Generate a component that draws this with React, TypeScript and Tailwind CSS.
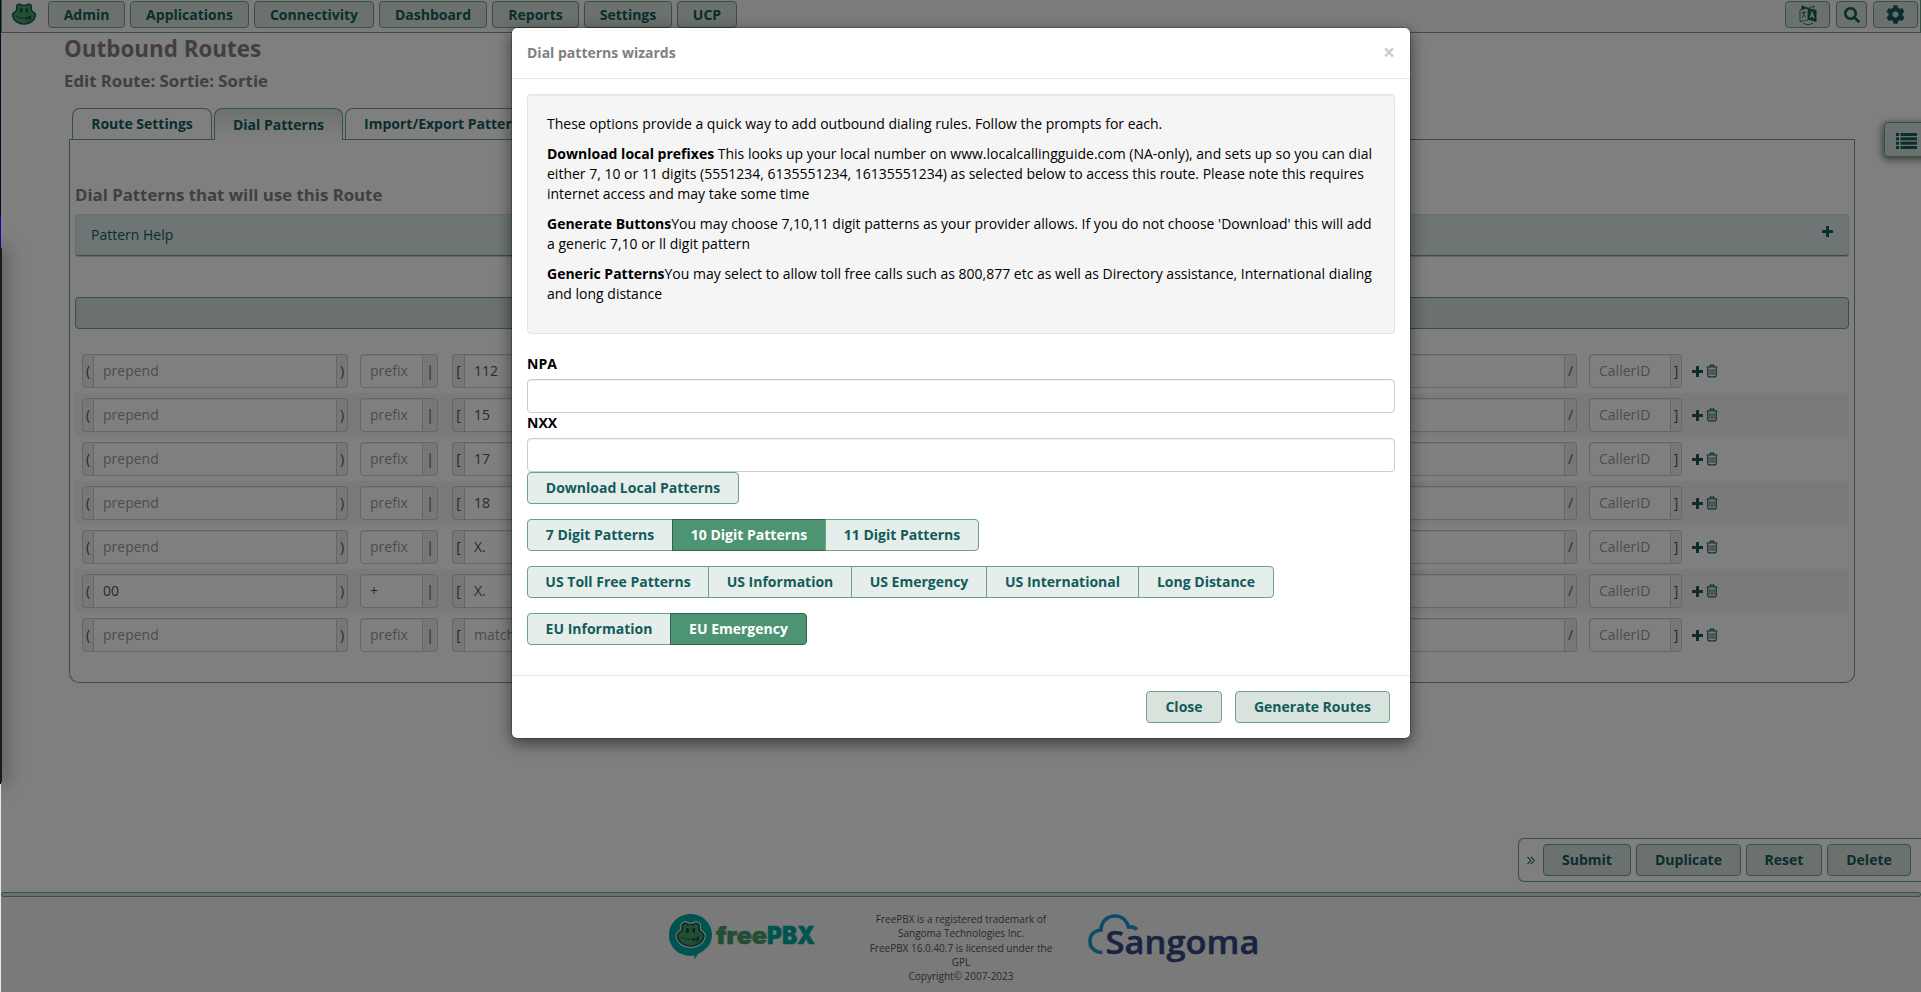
import type { ReactNode } from "react";
import { FaSearch, FaCog } from "react-icons/fa";

const NAV = [
  { label: "Admin", width: "w-[77px]" },
  { label: "Applications", width: "w-[119px]" },
  { label: "Connectivity", width: "w-[120px]" },
  { label: "Dashboard", width: "w-[108px]" },
  { label: "Reports", width: "w-[87px]" },
  { label: "Settings", width: "w-[88px]" },
  { label: "UCP", width: "w-[60px]" },
];

type Pattern = { prepend?: string; prefix?: string; match?: string };

const PATTERNS: Pattern[] = [
  { match: "112" },
  { match: "15" },
  { match: "17" },
  { match: "18" },
  { match: "X." },
  { prepend: "00", prefix: "+", match: "X." },
  {},
];

const BUTTON =
  "flex items-center justify-center rounded border border-[#68a388] bg-[#d7e3dc] text-sm font-bold text-[#125c5a]";

function FrogFace() {
  return (
    <g>
      <path
        d="M12 8C12 2 21 1 23 5.500Q28 4 33 5.500C35 1 44 2 44 8C44 11 43 13 45 17C50 20 54 23 53 28C51 39 39 46 28 46C17 46 5 39 3 28C2 23 6 20 11 17C13 13 12 11 12 8Z"
        fill="#489c66"
        stroke="#16504e"
        strokeWidth="3"
      />
      <ellipse cx="22" cy="16" rx="2.600" ry="5" fill="#12403f" />
      <ellipse cx="34" cy="16" rx="2.600" ry="5" fill="#12403f" />
      <path d="M12 29C20 35 32 35 43 28" fill="none" stroke="#16504e" strokeWidth="1.800" strokeLinecap="round" />
      <path d="M30 34L44 28C45 34 41 40 35 39Z" fill="#16504e" />
      <path d="M34 36L40 34L38 38Z" fill="#f08a5a" />
    </g>
  );
}

function LanguageIcon() {
  return (
    <svg width="18" height="20" viewBox="0 0 18 20" fill="none">
      <path d="M1 5L9 3V15L1 16.500Z" stroke="#125c5a" strokeWidth="0.800" />
      <path d="M3 1L9 3.500L15 1V3.500" stroke="#125c5a" strokeWidth="0.800" />
      <path d="M2.500 0.500L9 3L2.500 4.500Z" fill="#125c5a" />
      <path d="M9 3L17.500 5V17L9 14.800Z" fill="#125c5a" />
      <path d="M11.200 13L13 7.500L15.200 13.500M11.800 11H14.500" stroke="#d7e3dc" strokeWidth="1.300" />
      <path d="M3 8L7 7.200M5 6V8C5 10 4 12 3 13M4 9.500L7 12.500" stroke="#125c5a" strokeWidth="0.900" />
      <path d="M4 18C7 20 11 20 14 18" stroke="#125c5a" strokeWidth="0.900" />
    </svg>
  );
}

function PlusIcon({ className }: { className?: string }) {
  return (
    <svg width="11" height="11" viewBox="0 0 11 11" fill="currentColor" className={className}>
      <rect x="0" y="4" width="11" height="3" rx="0.600" />
      <rect x="4" y="0" width="3" height="11" rx="0.600" />
    </svg>
  );
}

function ListIcon() {
  return (
    <svg width="21" height="16" viewBox="0 0 21 16" fill="currentColor">
      {[0, 4.3, 8.700, 13].map((y) => (
        <g key={y}>
          <rect x="0" y={y} width="3" height="3" />
          <rect x="4.500" y={y} width="16.500" height="3" />
        </g>
      ))}
    </svg>
  );
}

function TrashIcon() {
  return (
    <svg width="12" height="14" viewBox="0 0 12 14" fill="none" stroke="#125c5a" strokeWidth="1.200">
      <path d="M0.500 3H11.500M3.800 3L4.300 1.100H7.700L8.200 3M1.800 3V11.600Q1.800 12.900 3 12.900H9Q10.200 12.900 10.200 11.600V3" />
      <path d="M4 5V11M6 5V11M8 5V11" strokeWidth="0.900" />
    </svg>
  );
}

function FreePbxLogo() {
  return (
    <svg width="148" height="46" viewBox="0 0 148 46">
      <path d="M21.500 0C33.500 0 43 9.500 43 21C43 31 36 36.500 29 40L25.500 45.500V41.500C10 43.500 0 33.500 0 21C0 9.500 9.500 0 21.500 0Z" fill="#00a8a0" />
      <g transform="translate(6.800 7.800) scale(0.530)">
        <path
          d="M12 8C12 2 21 1 23 5.500Q28 4 33 5.500C35 1 44 2 44 8C44 11 43 13 45 17C50 20 54 23 53 28C51 39 39 46 28 46C17 46 5 39 3 28C2 23 6 20 11 17C13 13 12 11 12 8Z"
          fill="#f2f5f3"
          stroke="#f2f5f3"
          strokeWidth="7"
        />
        <FrogFace />
      </g>
      <text x="47" y="30" fontFamily="Inter" fontWeight="900" fontSize="24" stroke="#489c66" strokeWidth="0.500" textLength="51" lengthAdjust="spacingAndGlyphs" fill="#489c66">
        free
      </text>
      <text x="98" y="30" fontFamily="Inter" fontWeight="900" fontSize="24" stroke="#00a8a0" strokeWidth="0.500" textLength="48" lengthAdjust="spacingAndGlyphs" fill="#00a8a0">
        PBX
      </text>
    </svg>
  );
}

function SangomaLogo() {
  return (
    <svg width="172" height="52" viewBox="0 0 172 52">
      <path
        d="M14.500 38.300H11C4 36 1.500 31 2 26C2.500 20 7 16.500 13 16C13 8 19 2 27 2C34.500 2 39 7 40.500 13C44 12.500 47 13.500 49 15.500"
        fill="none"
        stroke="#1a98d0"
        strokeWidth="3.600"
      />
      <text x="17.500" y="39.500" fontFamily="Open Sans" fontWeight="600" fontSize="33" stroke="#344882" strokeWidth="0.500" textLength="154" lengthAdjust="spacingAndGlyphs" fill="#344882">
        Sangoma
      </text>
    </svg>
  );
}

function Addon({ children, width, side }: { children: ReactNode; width: string; side: "left" | "right" }) {
  return (
    <div
      className={`${width} flex shrink-0 items-center justify-center border border-[#cccccc] bg-[#eeeeee] text-sm leading-none text-[#555555] ${
        side === "left" ? "rounded-l border-r-0" : "rounded-r border-l-0"
      }`}
    >
      {children}
    </div>
  );
}

function Field({ value, hint, rounded }: { value?: string; hint: string; rounded?: boolean }) {
  return (
    <div
      className={`flex min-w-0 grow items-center border border-[#cccccc] bg-white pl-[9px] text-sm shadow-[inset_0_1px_1px_rgba(0,0,0,0.075)] ${
        rounded ? "rounded-l" : ""
      } ${value ? "text-[#555555]" : "text-[#999999]"}`}
    >
      {value ?? hint}
    </div>
  );
}

function PatternRow({ row, striped }: { row: Pattern; striped: boolean }) {
  return (
    <div className={`flex h-11 items-center pl-[7px] ${striped ? "bg-[#f4f4f4]" : ""}`}>
      <div className="flex h-[34px] w-[266px]">
        <Addon width="w-[11px]" side="left">(</Addon>
        <Field value={row.prepend} hint="prepend" />
        <Addon width="w-[11px]" side="right">)</Addon>
      </div>
      <div className="ml-3 flex h-[34px] w-[78px]">
        <Field value={row.prefix} hint="prefix" rounded />
        <Addon width="w-[15px]" side="right">|</Addon>
      </div>
      <div className="ml-3.5 flex h-[34px] w-[1125px]">
        <Addon width="w-3" side="left">[</Addon>
        <Field value={row.match} hint="match pattern" />
        <Addon width="w-3" side="right">/</Addon>
      </div>
      <div className="ml-3 flex h-[34px] w-[93px]">
        <Field hint="CallerID" rounded />
        <Addon width="w-[11px]" side="right">]</Addon>
      </div>
      <div className="ml-2.5 flex items-center gap-[3px] text-[#125c5a]">
        <PlusIcon />
        <TrashIcon />
      </div>
    </div>
  );
}

function Tab({ label, width, active }: { label: string; width: string; active?: boolean }) {
  return (
    <div
      className={`${width} flex shrink-0 items-center justify-center rounded-t-lg border border-b-0 border-[#68a388] text-sm font-bold text-[#125c5a] ${
        active ? "h-8 bg-linear-to-b from-[#d7e3dc] to-white" : "mb-px h-[31px]"
      }`}
    >
      {label}
    </div>
  );
}

type GroupItem = { label: string; width: string; on?: boolean };

function ButtonGroup({ items }: { items: GroupItem[] }) {
  return (
    <div className="mt-[15px] flex h-8">
      {items.map((item, i) => (
        <div
          key={item.label}
          className={`${item.width} ${i > 0 ? "-ml-px" : "rounded-l"} ${i === items.length - 1 ? "rounded-r" : ""} flex shrink-0 items-center justify-center border text-sm font-bold ${
            item.on ? "border-[#37604c] bg-[#4d9472] text-white" : "border-[#68a388] bg-[#e5eeea] text-[#125c5a]"
          }`}
        >
          {item.label}
        </div>
      ))}
    </div>
  );
}

function Page() {
  return (
    <div className="ml-px flex h-[992px] w-[1920px] flex-col bg-white">
      <header className="flex h-[33px] shrink-0 items-start border-x border-b border-[#68a388] bg-[#f8f8f8] pt-px">
        <svg width="26" height="22" viewBox="0 0 56 48" className="mt-0.5 ml-[9px]">
          <FrogFace />
        </svg>
        <nav className="ml-[11px] flex gap-[5px]">
          {NAV.map((n) => (
            <div key={n.label} className={`${BUTTON} ${n.width} h-[27px]`}>
              {n.label}
            </div>
          ))}
        </nav>
        <div className="ml-auto flex gap-1.5 pr-0.5">
          <div className={`${BUTTON} h-[27px] w-[45px]`}>
            <LanguageIcon />
          </div>
          <div className={`${BUTTON} h-[27px] w-[31px]`}>
            <FaSearch size={16} />
          </div>
          <div className={`${BUTTON} h-[27px] w-[45px]`}>
            <FaCog size={19} />
          </div>
        </div>
      </header>

      <main className="flex grow flex-col pl-[63px]">
        <h1 className="mt-[3px] text-[22.4px] leading-[26px] font-bold text-[#808080]">Outbound Routes</h1>
        <h2 className="mt-[9px] text-[16.8px] leading-5 font-bold text-[#808080]">Edit Route: Sortie: Sortie</h2>
        <div className="mt-[17px] -mb-px ml-2 flex h-8 items-end gap-0.5">
          <Tab label="Route Settings" width="w-[140px]" />
          <Tab label="Dial Patterns" width="w-[129px]" active />
          <Tab label="Import/Export Patterns" width="w-[202px]" />
        </div>
        <section className="ml-[5px] h-[544px] w-[1786px] rounded-b-[10px] border border-[#68a388] px-[5px] [border-top-color:transparent]">
          <div className="-mx-1.5 -mt-px flex h-px">
            <div className="w-[145px] bg-[#68a388]" />
            <div className="w-[129px] border-x border-[#68a388]" />
            <div className="grow bg-[#68a388]" />
          </div>
          <h3 className="mt-[45px] text-[16.8px] leading-5 font-bold text-[#808080]">Dial Patterns that will use this Route</h3>
          <div className="mt-[9px] flex h-[42px] items-center rounded border border-[#cddcda] border-b-[#68a388] bg-[#dcebe9] pl-[15px] text-sm text-[#125c5a] shadow-[0_1px_1px_rgba(0,0,0,0.2)]">
            <span>Pattern Help</span>
            <PlusIcon className="mr-[15px] mb-2 ml-auto" />
          </div>
          <div className="mt-[41px] h-8 rounded border border-[#68a388] bg-[#d7e3dc]" />
          <div className="mt-5">
            {PATTERNS.map((row, i) => (
              <PatternRow key={i} row={row} striped={i % 2 === 1} />
            ))}
          </div>
        </section>
        <div className="mt-[155px] ml-auto flex h-11 w-[403px] shrink-0 items-center gap-[5px] rounded-l-md border border-r-0 border-[#68a388] pl-[7px] text-[#125c5a]">
          <svg width="8" height="9" viewBox="0 0 8 9" className="mr-[3px] ml-px shrink-0" fill="none" stroke="#125c5a" strokeWidth="1.100">
            <path d="M0.500 0.800L3.800 4.500L0.500 8.200M4 0.800L7.300 4.500L4 8.200" />
          </svg>
          <div className={`${BUTTON} h-8 w-[88px]`}>Submit</div>
          <div className={`${BUTTON} h-8 w-[105px]`}>Duplicate</div>
          <div className={`${BUTTON} h-8 w-[76px]`}>Reset</div>
          <div className={`${BUTTON} h-8 w-[84px]`}>Delete</div>
        </div>
      </main>

      <footer className="h-[100px] shrink-0 bg-[#f4f4f4]">
        <div className="h-[5px] rounded border border-[#68a388] bg-[#d7e3dc]" />
        <div className="flex items-start">
          <div className="mt-[17px] ml-[668px] w-[148px]">
            <FreePbxLogo />
          </div>
          <div className="mt-[15px] ml-11 w-[200px] text-center text-[10px] leading-[14.3px] text-[#555555]">
            FreePBX is a registered trademark of
            <br />
            Sangoma Technologies Inc.
            <br />
            FreePBX 16.0.40.7 is licensed under the
            <br />
            GPL
            <br />
            Copyright© 2007-2023
          </div>
          <div className="mt-[17px] ml-[27px]">
            <SangomaLogo />
          </div>
        </div>
      </footer>

      <div className="absolute top-[122px] left-[1884px] flex h-[35px] w-[50px] items-center rounded border border-[#68a388] bg-[#d7e3dc] pt-0.5 pl-[11px] text-[#125c5a] shadow-[-1px_2px_8px_rgba(0,0,0,0.6)]">
        <ListIcon />
      </div>
    </div>
  );
}

function Wizard() {
  return (
    <div className="flex h-[712px] w-[900px] flex-col rounded-md border border-black/20 bg-white bg-clip-padding text-sm text-black shadow-[0_5px_15px_rgba(0,0,0,0.5)]">
      <div className="flex h-[51px] shrink-0 items-center border-b border-[#e5e5e5] px-[15px] pb-px">
        <span className="font-bold text-[#808080]">Dial patterns wizards</span>
        <span className="ml-auto text-[21px] leading-none font-bold text-[#cccccc]">×</span>
      </div>
      <div className="h-[596px] px-[15px] pt-[15px]">
        <div className="flex h-[240px] flex-col gap-2.5 rounded border border-[#e3e3e3] bg-[#f5f5f5] p-[19px] leading-5 shadow-[inset_0_1px_1px_rgba(0,0,0,0.05)]">
          <p>These options provide a quick way to add outbound dialing rules. Follow the prompts for each.</p>
          <p>
            <b>Download local prefixes</b> This looks up your local number on www.localcallingguide.com (NA-only), and sets up so you can dial either 7, 10 or 11 digits (5551234, 6135551234, 16135551234) as selected below to access this route. Please note this requires internet access and may take some time
          </p>
          <p>
            <b>Generate Buttons</b>You may choose 7,10,11 digit patterns as your provider allows. If you do not choose 'Download' this will add a generic 7,10 or ll digit pattern
          </p>
          <p>
            <b>Generic Patterns</b>You may select to allow toll free calls such as 800,877 etc as well as Directory assistance, International dialing and long distance
          </p>
        </div>
        <div className="mt-5 mb-[5px] leading-5 font-bold">NPA</div>
        <div className="h-[34px] rounded border border-[#cccccc] shadow-[inset_0_1px_1px_rgba(0,0,0,0.075)]" />
        <div className="mb-[5px] leading-5 font-bold">NXX</div>
        <div className="h-[34px] rounded border border-[#cccccc] shadow-[inset_0_1px_1px_rgba(0,0,0,0.075)]" />
        <div className="flex h-8 w-[212px] items-center justify-center rounded border border-[#68a388] bg-[#e5eeea] font-bold text-[#125c5a]">
          Download Local Patterns
        </div>
        <ButtonGroup
          items={[
            { label: "7 Digit Patterns", width: "w-[146px]" },
            { label: "10 Digit Patterns", width: "w-[154px]", on: true },
            { label: "11 Digit Patterns", width: "w-[154px]" },
          ]}
        />
        <ButtonGroup
          items={[
            { label: "US Toll Free Patterns", width: "w-[182px]" },
            { label: "US Information", width: "w-[144px]" },
            { label: "US Emergency", width: "w-[136px]" },
            { label: "US International", width: "w-[153px]" },
            { label: "Long Distance", width: "w-[136px]" },
          ]}
        />
        <ButtonGroup
          items={[
            { label: "EU Information", width: "w-[144px]" },
            { label: "EU Emergency", width: "w-[137px]", on: true },
          ]}
        />
      </div>
      <div className="flex grow items-start justify-end gap-[13px] border-t border-[#e5e5e5] pt-[15px] pr-5">
        <div className={`${BUTTON} h-8 w-[76px]`}>Close</div>
        <div className={`${BUTTON} h-8 w-[155px]`}>Generate Routes</div>
      </div>
    </div>
  );
}

export default function App() {
  return (
    <div className="relative h-[992px] w-[1921px] overflow-hidden bg-[#0a0a28] font-['Open_Sans',sans-serif]">
      <Page />
      <div className="absolute inset-y-0 right-0 left-px flex items-start justify-center bg-black/50 pt-[27px]">
        <Wizard />
      </div>
      <div className="absolute top-[216px] left-0 h-8 w-px bg-[#1c00b8]" />
      <div className="absolute top-[248px] left-0 h-[534px] w-0.5 bg-[#1a1a1a] shadow-[0_0_18px_2px_rgba(0,0,0,0.6)]" />
      <div className="absolute top-[784px] left-0 h-[208px] w-px bg-[#e8e8e8]" />
    </div>
  );
}
